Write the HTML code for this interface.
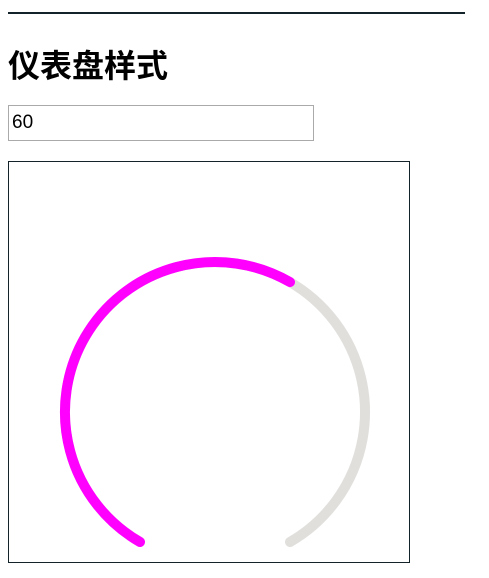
<!DOCTYPE html>
<html><head><meta charset="utf-8"><style>
body{margin:0;background:#fff;width:489px;height:578px;position:relative;overflow:hidden;font-family:"Liberation Sans","Noto Sans CJK SC",sans-serif}
.hr{position:absolute;left:8px;top:12px;width:457px;height:2px;background:#14232a}
h1{position:absolute;left:8px;top:46px;margin:0;font-size:32px;line-height:40px;font-weight:bold;color:#000;font-family:"Liberation Sans","Noto Sans CJK SC",sans-serif}
.in{position:absolute;left:8px;top:105px;width:301px;height:34px;border:1px solid #aaa;font-size:19px;line-height:34px;padding-left:3px;box-sizing:content-box}
.cv{position:absolute;left:8px;top:161px;width:400px;height:400px;border:1px solid #14232a}
</style></head><body>
<div class="hr"></div>
<h1>仪表盘样式</h1>
<div class="in">60</div>
<div class="cv"><svg width="400" height="400" viewBox="9 162 400 400" style="display:block">
<path d="M140 542 A150 150 0 1 1 290 542" fill="none" stroke="#e0dfdc" stroke-width="10" stroke-linecap="round"/>
<path d="M140 542 A150 150 0 0 1 290 282.1" fill="none" stroke="#ff00ff" stroke-width="10" stroke-linecap="round"/>
</svg></div>
</body></html>
